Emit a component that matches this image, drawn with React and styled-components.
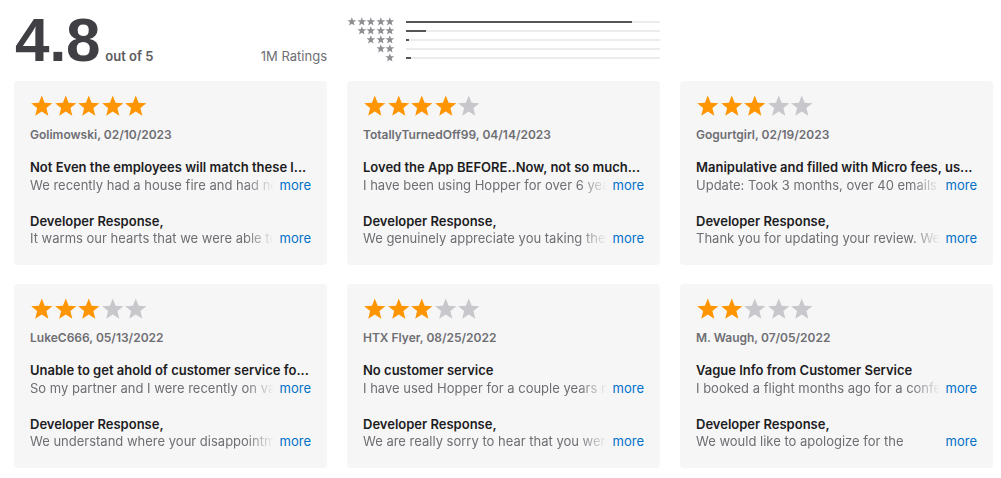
import React from "react";
import styled, { createGlobalStyle } from "styled-components";

const Global = createGlobalStyle`
  html, body { margin: 0; padding: 0; background: #fff; }
  body { font-family: Inter, "Noto Sans", "Liberation Sans", sans-serif; -webkit-font-smoothing: antialiased; }
`;

const Page = styled.div`
  width: 1001px;
  padding: 0 8px 0 14px;
  box-sizing: border-box;
`;

const Columns = styled.div`
  display: grid;
  grid-template-columns: repeat(3, 313px);
  column-gap: 20px;
  row-gap: ${(p) => p.$rowGap || 0}px;
`;

const Header = styled(Columns)`
  height: 81px;
  align-items: start;
`;

const Summary = styled.div`
  display: flex;
  align-items: baseline;
  padding-top: 5px;
  padding-left: 1px;
  color: #3a3a3c;
`;

const Big = styled.span`
  font-family: "Liberation Sans", Arial, sans-serif;
  font-weight: 700;
  font-size: 62px;
  line-height: 70px;
  letter-spacing: -0.3px;
  color: #404044;
`;

const OutOf = styled.span`
  font-size: 13px;
  font-weight: 600;
  color: #5c5c60;
  margin-left: 5px;
`;

const Count = styled.span`
  margin-left: auto;
  font-size: 13px;
  color: #6e6e73;
`;

const Histogram = styled.div`
  padding-top: 17px;
  display: flex;
  flex-direction: column;
`;

const HistRow = styled.div`
  display: grid;
  grid-template-columns: 48px 254px;
  column-gap: 11px;
  align-items: center;
  height: 9px;
`;

const SmallStars = styled.div`
  display: flex;
  justify-content: flex-end;
`;

const Track = styled.div`
  height: 2px;
  background: #ececee;
`;

const Fill = styled.div`
  height: 2px;
  background: #555558;
`;

const Card = styled.div`
  background: #f6f6f7;
  border-radius: 4px;
  height: 184px;
  box-sizing: border-box;
  padding: 14px 16px 18px 16px;
  display: flex;
  flex-direction: column;
`;

const StarRow = styled.div`
  display: flex;
  height: 22px;
`;

const Name = styled.div`
  margin-top: 10px;
  font-size: 12px;
  line-height: 16px;
  font-weight: 600;
  color: #6e6e73;
`;

const Title = styled.div`
  margin-top: ${(p) => p.$gap}px;
  font-size: 13px;
  line-height: 18px;
  font-weight: 600;
  color: #1d1d1f;
  white-space: nowrap;
  overflow: hidden;
  text-overflow: ellipsis;
`;

const Line = styled.div`
  display: flex;
  font-size: 13px;
  line-height: 18px;
  color: #6e6e73;
`;

const Snippet = styled.span`
  flex: 1;
  min-width: 0;
  white-space: nowrap;
  overflow: hidden;
  -webkit-mask-image: linear-gradient(to right, #000 calc(100% - 28px), transparent 100%);
  mask-image: linear-gradient(to right, #000 calc(100% - 28px), transparent 100%);
`;

const More = styled.a`
  color: #0070c9;
  margin-left: 6px;
  text-decoration: none;
  flex: none;
`;

const Star = ({ size, color }) => (
  <svg width={size * 1.07} height={size} viewBox="0 0 25.5 24" style={{ flex: "none" }}>
    <polygon
      fill={color}
      points="12.75,0.6 15.85,8.4 24.3,8.9 17.8,14.3 19.9,22.6 12.75,18 5.6,22.6 7.7,14.3 1.2,8.9 9.65,8.4"
    />
  </svg>
);

const hist = [
  { n: 5, pct: 89 },
  { n: 4, pct: 8 },
  { n: 3, pct: 1 },
  { n: 2, pct: 0 },
  { n: 1, pct: 2 },
];

const reviews = [
  {
    rating: 5,
    name: "Golimowski, 02/10/2023",
    title: "Not Even the employees will match these l...",
    body: "We recently had a house fire and had no",
    resp: "It warms our hearts that we were able to",
  },
  {
    rating: 4,
    name: "TotallyTurnedOff99, 04/14/2023",
    title: "Loved the App BEFORE..Now, not so much...",
    body: "I have been using Hopper for over 6 years",
    resp: "We genuinely appreciate you taking the t",
  },
  {
    rating: 3,
    name: "Gogurtgirl, 02/19/2023",
    title: "Manipulative and filled with Micro fees, us...",
    body: "Update: Took 3 months, over 40 emails a",
    resp: "Thank you for updating your review. We'",
  },
  {
    rating: 3,
    name: "LukeC666, 05/13/2022",
    title: "Unable to get ahold of customer service fo...",
    body: "So my partner and I were recently on vac",
    resp: "We understand where your disappointme",
  },
  {
    rating: 3,
    name: "HTX Flyer, 08/25/2022",
    title: "No customer service",
    body: "I have used Hopper for a couple years no",
    resp: "We are really sorry to hear that you were",
  },
  {
    rating: 2,
    name: "M. Waugh, 07/05/2022",
    title: "Vague Info from Customer Service",
    body: "I booked a flight months ago for a confer",
    resp: "We would like to apologize for the",
  },
];

const Review = ({ r }) => (
  <Card>
    <StarRow>
      {[0, 1, 2, 3, 4].map((i) => (
        <Star key={i} size={22} color={i < r.rating ? "#ff9500" : "#c7c7cc"} />
      ))}
    </StarRow>
    <Name>{r.name}</Name>
    <Title $gap={15}>{r.title}</Title>
    <Line>
      <Snippet>{r.body}</Snippet>
      <More href="#">more</More>
    </Line>
    <Title $gap={18}>Developer Response,</Title>
    <Line>
      <Snippet>{r.resp}</Snippet>
      <More href="#">more</More>
    </Line>
  </Card>
);

export default function App() {
  return (
    <Page>
      <Global />
      <Header>
        <Summary>
          <Big>4.8</Big>
          <OutOf>out of 5</OutOf>
          <Count>1M Ratings</Count>
        </Summary>
        <Histogram>
          {hist.map((h) => (
            <HistRow key={h.n}>
              <SmallStars>
                {Array.from({ length: h.n }).map((_, i) => (
                  <Star key={i} size={9} color="#8e8e93" />
                ))}
              </SmallStars>
              <Track>
                <Fill style={{ width: `${h.pct}%` }} />
              </Track>
            </HistRow>
          ))}
        </Histogram>
        <div />
      </Header>
      <Columns $rowGap={19}>
        {reviews.map((r, i) => (
          <Review key={i} r={r} />
        ))}
      </Columns>
    </Page>
  );
}
